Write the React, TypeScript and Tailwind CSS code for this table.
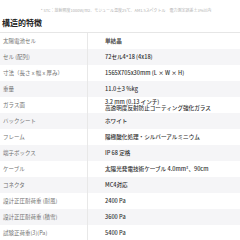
const rows: [string, string | string[]][] = [
  ["太陽電池セル", "単結晶"],
  ["セル (配列)", "72セル4*18 (4x18)"],
  ["寸法（長さ x 幅 x 厚み）", "1565X705x30mm (L × W × H)"],
  ["重量", "11.0±3 %kg"],
  ["ガラス面", ["3.2 mm (0.13 インチ)", "高透明度反射防止コーティング強化ガラス"]],
  ["バックシート", "ホワイト"],
  ["フレーム", "陽極酸化処理・シルバーアルミニウム"],
  ["端子ボックス", "IP 68 定格"],
  ["ケーブル", "太陽光発電技術ケーブル 4.0mm²、90cm"],
  ["コネクタ", "MC4対応"],
  ["設計正圧耐荷重 (耐風)", "2400 Pa"],
  ["設計正圧耐荷重 (積雪)", "3600 Pa"],
  ["試験正荷重(3)(Pa)", "5400 Pa"],
];

export default function App() {
  return (
    <div
      className="w-[240px] h-[240px] overflow-hidden bg-white"
      style={{ fontFamily: '"Noto Sans CJK JP", "Noto Sans", sans-serif' }}
    >
      <p className="mt-[7px] text-center text-[4px] leading-[6px] text-[#b0b0b0] whitespace-nowrap pl-[12px]">
        * STC：放射照度1000W/m2、モジュール温度25℃、AM1.5スペクトル　電力測定誤差±3%以内
      </p>
      <h2 className="mt-[5px] px-[2px] text-[8px] leading-[10px] font-bold text-[#222]">構造的特徴</h2>
      <div className="mt-[4px] border-t border-[#e6e6e6]">
        {rows.map(([label, value], i) => (
          <div
            key={label}
            className={`grid grid-cols-[88px_1fr] h-[16px] ${i % 2 === 1 ? "bg-[#f5f5f7]" : "bg-white"}`}
          >
            <div className="flex items-center pl-[3px] text-[5.5px] text-[#707070] border-r border-[#e8e8e8] whitespace-nowrap">
              {label}
            </div>
            <div className="flex flex-col justify-center pl-[17px] text-[5.6px] leading-[6.5px] text-[#333] font-medium whitespace-nowrap">
              {Array.isArray(value) ? value.map((v) => <span key={v}>{v}</span>) : <span>{value}</span>}
            </div>
          </div>
        ))}
      </div>
    </div>
  );
}
